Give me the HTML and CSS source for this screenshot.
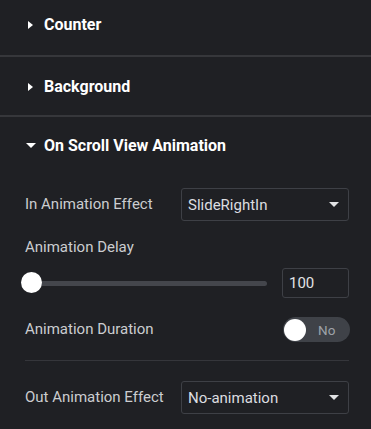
FILE: index.html
```html
<!DOCTYPE html>
<html>
<head>
<meta charset="utf-8">
<link rel="stylesheet" href="styles.css">
</head>
<body>
<div class="panel">
  <div class="section first">
    <div class="head"><span class="tri-right"></span><span class="title">Counter</span></div>
  </div>
  <div class="section">
    <div class="head"><span class="tri-right"></span><span class="title">Background</span></div>
  </div>
  <div class="section open">
    <div class="head"><span class="tri-down"></span><span class="title">On Scroll View Animation</span></div>
    <div class="content">
      <div class="row row-in">
        <span class="label">In Animation Effect</span>
        <div class="select"><span>SlideRightIn</span><span class="caret"></span></div>
      </div>
      <div class="label label-delay">Animation Delay</div>
      <div class="slider-row">
        <div class="slider"><div class="track"></div><div class="knob"></div></div>
        <div class="num">100</div>
      </div>
      <div class="row row-dur">
        <span class="label">Animation Duration</span>
        <div class="toggle"><span class="tknob"></span><span class="tlabel">No</span></div>
      </div>
      <div class="divider"></div>
      <div class="row row-out">
        <span class="label">Out Animation Effect</span>
        <div class="select"><span>No-animation</span><span class="caret"></span></div>
      </div>
    </div>
  </div>
</div>
</body>
</html>
```
FILE: styles.css
```css
html, body {
  margin: 0;
  padding: 0;
  background: #1f2024;
}
body {
  font-family: Roboto, "Liberation Sans", sans-serif;
  width: 371px;
  height: 429px;
  overflow: hidden;
}
.section {
  border-bottom: 2px solid #36373b;
}
.section.open {
  border-bottom: none;
}
.head {
  height: 58px;
  display: flex;
  align-items: center;
  padding-left: 28px;
  box-sizing: border-box;
}
.first .head {
  height: 55px;
  padding-bottom: 6px;
}
.open .head {
  height: 56px;
  padding-left: 26px;
}
.tri-right {
  width: 0;
  height: 0;
  border-left: 5px solid #fff;
  border-top: 4px solid transparent;
  border-bottom: 4px solid transparent;
  margin-right: 11px;
  margin-top: 1px;
}
.tri-down {
  width: 0;
  height: 0;
  border-top: 5px solid #fff;
  border-left: 5px solid transparent;
  border-right: 5px solid transparent;
  margin-right: 8px;
  margin-top: 1px;
}
.title {
  color: #fff;
  font-weight: 700;
  font-size: 16px;
  line-height: 19px;
}
.content {
  padding: 0 22px 0 25px;
}
.row {
  display: flex;
  align-items: center;
  justify-content: space-between;
}
.label {
  color: #cbcdd0;
  font-size: 15px;
  line-height: 17px;
}
.row-in {
  margin-top: 15px;
}
.select {
  width: 168px;
  height: 33px;
  box-sizing: border-box;
  border: 1px solid #3e4046;
  border-radius: 3px;
  display: flex;
  align-items: center;
  justify-content: space-between;
  padding: 0 9px 0 6px;
  color: #dcdde0;
  font-size: 15px;
}
.caret {
  width: 0;
  height: 0;
  border-top: 5px solid #e2e3e5;
  border-left: 5px solid transparent;
  border-right: 5px solid transparent;
}
.label-delay {
  margin-top: 18px;
}
.slider-row {
  margin-top: 12px;
  display: flex;
  align-items: center;
  justify-content: space-between;
  height: 30px;
}
.slider {
  position: relative;
  width: 242px;
  height: 22px;
  display: flex;
  align-items: center;
}
.track {
  width: 100%;
  height: 5px;
  border-radius: 3px;
  background: #44464c;
}
.knob {
  position: absolute;
  left: -4px;
  top: 0;
  width: 21px;
  height: 21px;
  border-radius: 50%;
  background: #fff;
}
.num {
  width: 67px;
  height: 30px;
  box-sizing: border-box;
  border: 1px solid #3e4046;
  border-radius: 3px;
  display: flex;
  align-items: center;
  padding-left: 6px;
  color: #e2e3e5;
  font-size: 15px;
}
.row-dur {
  margin-top: 19px;
}
.toggle {
  width: 67px;
  height: 25px;
  border-radius: 13px;
  background: #3f4248;
  display: flex;
  align-items: center;
  position: relative;
  margin-right: -1px;
}
.tknob {
  width: 22px;
  height: 22px;
  border-radius: 50%;
  background: #fff;
  margin-left: 1px;
}
.tlabel {
  color: #9ea2a9;
  font-size: 13.5px;
  margin-left: 12px;
}
.divider {
  margin-top: 18px;
  height: 1px;
  background: #35363b;
}
.row-out {
  margin-top: 20px;
}
```
